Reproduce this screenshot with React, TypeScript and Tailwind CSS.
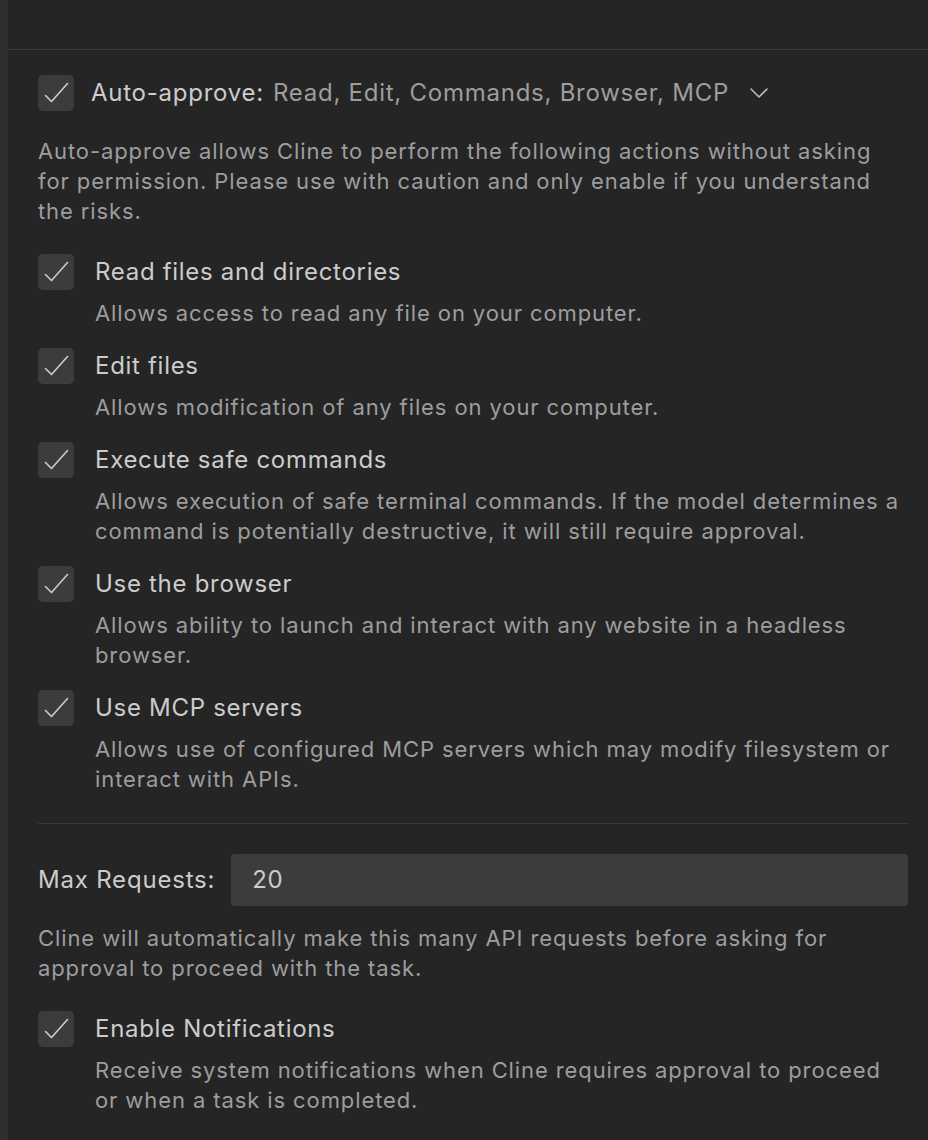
const font = { fontFamily: "Inter, 'Noto Sans', sans-serif" };

const items = [
  {
    title: "Read files and directories",
    desc: "Allows access to read any file on your computer.",
  },
  {
    title: "Edit files",
    desc: "Allows modification of any files on your computer.",
  },
  {
    title: "Execute safe commands",
    desc: "Allows execution of safe terminal commands. If the model determines a command is potentially destructive, it will still require approval.",
  },
  {
    title: "Use the browser",
    desc: "Allows ability to launch and interact with any website in a headless browser.",
  },
  {
    title: "Use MCP servers",
    desc: "Allows use of configured MCP servers which may modify filesystem or interact with APIs.",
  },
];

function Check() {
  return (
    <div className="w-[36px] h-[36px] shrink-0 rounded-[5px] bg-[#3c3c3c]">
      <svg width="36" height="36" viewBox="0 0 36 36" fill="none">
        <path
          d="M7.5 20.5 L13.5 26.5 L29.5 8.5"
          stroke="#cccccc"
          strokeWidth="1.6"
          strokeLinecap="round"
          strokeLinejoin="round"
        />
      </svg>
    </div>
  );
}

function Option({ title, desc }: { title: string; desc: string }) {
  return (
    <div>
      <div className="flex items-center gap-[21px] h-[36px]">
        <Check />
        <span className="text-[24px] tracking-[0.7px] text-[#cccccc]">
          {title}
        </span>
      </div>
      <p className="mt-[8px] pl-[57px] text-[22px] leading-[30px] tracking-[0.9px] text-[#9d9d9d]">
        {desc}
      </p>
    </div>
  );
}

export default function App() {
  return (
    <div className="flex min-h-[1140px] bg-[#252526] antialiased" style={font}>
      <div className="w-[8px] shrink-0 bg-[#2e2e2e]" />
      <div className="flex-1">
        <div className="h-[50px] border-b border-[#3a3a3a]" />
        <div className="pl-[30px] pr-[20px]">
          {/* Header */}
          <div className="mt-[25px] flex items-center h-[36px]">
            <Check />
            <span className="ml-[17px] text-[24px] tracking-[0.75px] text-[#cccccc]">
              Auto-approve:
            </span>
            <span className="ml-[9px] text-[24px] tracking-[0.75px] text-[#9d9d9d]">
              Read, Edit, Commands, Browser, MCP
            </span>
            <svg
              className="ml-[20px]"
              width="20"
              height="12"
              viewBox="0 0 20 12"
              fill="none"
            >
              <path
                d="M2 2 L10 10 L18 2"
                stroke="#bbbbbb"
                strokeWidth="1.6"
                strokeLinecap="round"
                strokeLinejoin="round"
              />
            </svg>
          </div>

          <p className="mt-[25px] text-[22px] leading-[30px] tracking-[0.9px] text-[#9d9d9d]">
            Auto-approve allows Cline to perform the following actions without
            asking for permission. Please use with caution and only enable if
            you understand the risks.
          </p>

          <div className="mt-[28px] flex flex-col gap-[20px]">
            {items.map((it) => (
              <Option key={it.title} title={it.title} desc={it.desc} />
            ))}
          </div>

          <div className="mt-[29px] border-t border-[#3a3a3a]" />

          <div className="mt-[30px] flex items-center gap-[16px]">
            <span className="text-[24px] tracking-[0.8px] text-[#cccccc]">
              Max Requests:
            </span>
            <div className="flex-1 h-[52px] rounded-[4px] bg-[#3c3c3c] flex items-center pl-[21px] text-[24px] tracking-[0.7px] text-[#cccccc]">
              20
            </div>
          </div>

          <p className="mt-[17px] text-[22px] leading-[30px] tracking-[0.9px] text-[#9d9d9d]">
            Cline will automatically make this many API requests before asking
            for approval to proceed with the task.
          </p>

          <div className="mt-[28px]">
            <Option
              title="Enable Notifications"
              desc="Receive system notifications when Cline requires approval to proceed or when a task is completed."
            />
          </div>
        </div>
      </div>
    </div>
  );
}
